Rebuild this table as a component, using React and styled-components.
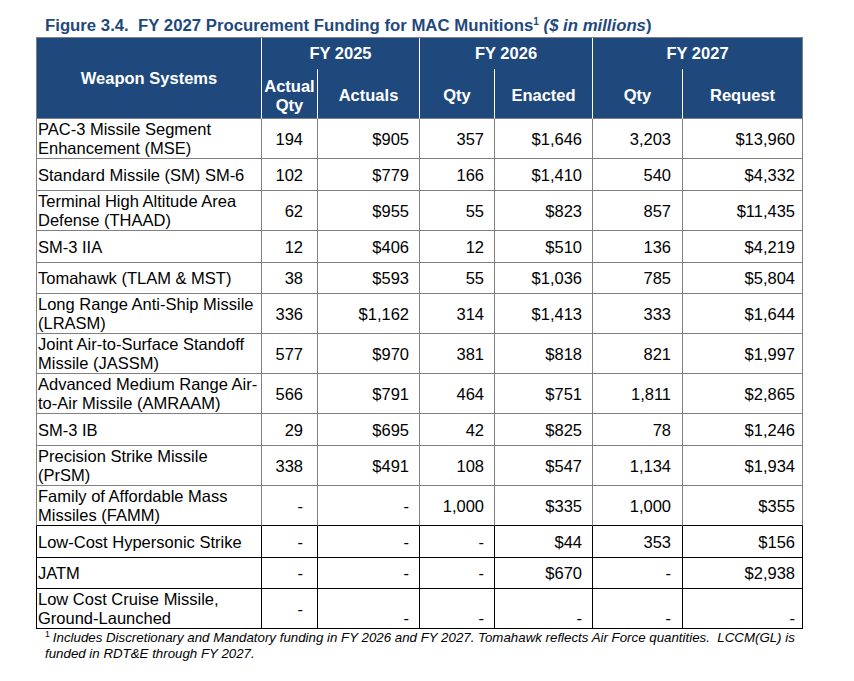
import React from "react";
import styled, { createGlobalStyle } from "styled-components";

const GlobalStyle = createGlobalStyle`
  *, *::before, *::after {
    box-sizing: border-box;
  }
  body {
    margin: 0;
    background: #ffffff;
    font-family: "Liberation Sans", Arial, sans-serif;
    color: #000000;
  }
`;

const Page = styled.div`
  padding: 16px 0 0 36px;
  width: 854px;
`;

const Title = styled.h1`
  margin: 0 0 1px 9px;
  height: 20px;
  font-size: 16.75px;
  line-height: 20px;
  font-weight: bold;
  color: #1f497d;
  white-space: nowrap;
`;

const Sup = styled.sup`
  font-size: 0.6em;
  line-height: 0;
  vertical-align: 0.6em;
`;

const Em = styled.em`
  font-style: italic;
`;

const Table = styled.table`
  border-collapse: separate;
  border-spacing: 0;
  table-layout: fixed;
  width: 767px;
  border-top: 1px solid #808080;
`;

const HeadCell = styled.th`
  padding: ${(p) => (p.$sub ? "4px 0 0" : "0")};
  height: ${(p) => p.$h}px;
  background: #1f497d;
  color: #ffffff;
  font-size: 16.5px;
  line-height: 18.5px;
  font-weight: bold;
  text-align: center;
  vertical-align: middle;
  border-right: 1px solid ${(p) => (p.$last ? "#808080" : "#ffffff")};
  border-left: ${(p) => (p.$first ? "1px solid #808080" : "none")};
  border-bottom: ${(p) => (p.$bottom ? "1px solid #808080" : "none")};
`;

const Row = styled.tr``;

const NameCell = styled.td`
  height: ${(p) => p.$h}px;
  padding: 1px 0 0 1px;
  font-size: 16.5px;
  line-height: 19px;
  white-space: pre-line;
  vertical-align: middle;
  border-left: 1px solid ${(p) => (p.$dark ? "#000000" : "#808080")};
  border-right: 1px solid ${(p) => (p.$dark ? "#000000" : "#808080")};
  border-bottom: 1px solid ${(p) => (p.$darkBottom ? "#000000" : "#808080")};
`;

const NumCell = styled.td`
  height: ${(p) => p.$h}px;
  padding: ${(p) => (p.$low ? 0 : 1)}px ${(p) => p.$pr}px 0 0;
  font-size: 16.5px;
  line-height: 19px;
  text-align: right;
  white-space: nowrap;
  vertical-align: ${(p) => (p.$low ? "bottom" : "middle")};
  border-right: 1px solid ${(p) => (p.$dark ? "#000000" : "#808080")};
  border-bottom: 1px solid ${(p) => (p.$darkBottom ? "#000000" : "#808080")};
`;

const Footnote = styled.p`
  margin: 1px 0 0 9px;
  width: 790px;
  font-size: 13.3px;
  line-height: 15.5px;
  font-style: italic;
  color: #000000;
`;

const FootSup = styled.sup`
  font-size: 0.65em;
  line-height: 0;
  vertical-align: 0.55em;
  font-style: normal;
  margin-right: 3px;
`;

// padding-right of each number column, read off the reference
const numPads = [14, 10, 10, 10, 11, 7];
const colWidths = [226, 56, 102, 75, 98, 90, 120];

const rows = [
  { name: "PAC-3 Missile Segment\nEnhancement (MSE)", h: 40, v: ["194", "$905", "357", "$1,646", "3,203", "$13,960"] },
  { name: "Standard Missile (SM) SM-6", h: 32, v: ["102", "$779", "166", "$1,410", "540", "$4,332"] },
  { name: "Terminal High Altitude Area\nDefense (THAAD)", h: 40, v: ["62", "$955", "55", "$823", "857", "$11,435"] },
  { name: "SM-3 IIA", h: 32, v: ["12", "$406", "12", "$510", "136", "$4,219"] },
  { name: "Tomahawk (TLAM & MST)", h: 31, v: ["38", "$593", "55", "$1,036", "785", "$5,804"] },
  { name: "Long Range Anti-Ship Missile\n(LRASM)", h: 40, v: ["336", "$1,162", "314", "$1,413", "333", "$1,644"] },
  { name: "Joint Air-to-Surface Standoff\nMissile (JASSM)", h: 40, v: ["577", "$970", "381", "$818", "821", "$1,997"] },
  { name: "Advanced Medium Range Air-\nto-Air Missile (AMRAAM)", h: 40, v: ["566", "$791", "464", "$751", "1,811", "$2,865"] },
  { name: "SM-3 IB", h: 32, v: ["29", "$695", "42", "$825", "78", "$1,246"] },
  { name: "Precision Strike Missile\n(PrSM)", h: 40, v: ["338", "$491", "108", "$547", "1,134", "$1,934"] },
  { name: "Family of Affordable Mass\nMissiles (FAMM)", h: 40, v: ["-", "-", "1,000", "$335", "1,000", "$355"] },
  { name: "Low-Cost Hypersonic Strike", h: 32, v: ["-", "-", "-", "$44", "353", "$156"] },
  { name: "JATM", h: 31, v: ["-", "-", "-", "$670", "-", "$2,938"] },
  { name: "Low Cost Cruise Missile,\nGround-Launched", h: 40, v: ["-", "-", "-", "-", "-", "-"], low: true },
];

const App = () => {
  return (
    <Page>
      <GlobalStyle />
      <Title>
        Figure 3.4.{"\u00a0 "}FY 2027 Procurement Funding for MAC Munitions
        <Sup>1</Sup> <Em>($ in millions</Em>)
      </Title>
      <Table>
        <colgroup>
          {colWidths.map((w, i) => (
            <col key={i} style={{ width: w }} />
          ))}
        </colgroup>
        <thead>
          <tr>
            <HeadCell rowSpan={2} $first $bottom $h={32}>
              Weapon Systems
            </HeadCell>
            <HeadCell colSpan={2} $h={31}>FY 2025</HeadCell>
            <HeadCell colSpan={2} $h={31}>FY 2026</HeadCell>
            <HeadCell colSpan={2} $last $h={31}>FY 2027</HeadCell>
          </tr>
          <tr>
            <HeadCell $sub $bottom $h={50}>
              Actual
              <br />
              Qty
            </HeadCell>
            <HeadCell $sub $bottom $h={50}>Actuals</HeadCell>
            <HeadCell $sub $bottom $h={50}>Qty</HeadCell>
            <HeadCell $sub $bottom $h={50}>Enacted</HeadCell>
            <HeadCell $sub $bottom $h={50}>Qty</HeadCell>
            <HeadCell $sub $bottom $last $h={50}>Request</HeadCell>
          </tr>
        </thead>
        <tbody>
          {rows.map((row, r) => (
            <Row key={row.name}>
              <NameCell $h={row.h} $dark={r >= 11} $darkBottom={r >= 10}>
                {row.name}
              </NameCell>
              {row.v.map((val, c) => (
                <NumCell
                  key={c}
                  $h={row.h}
                  $pr={numPads[c]}
                  $dark={r >= 11}
                  $darkBottom={r >= 10}
                  $low={row.low && c > 0}
                >
                  {val}
                </NumCell>
              ))}
            </Row>
          ))}
        </tbody>
      </Table>
      <Footnote>
        <FootSup>1</FootSup>
        Includes Discretionary and Mandatory funding in FY 2026 and FY 2027.
        Tomahawk reflects Air Force quantities.{"\u00a0 "}LCCM(GL) is
        <br />
        funded in RDT&amp;E through FY 2027.
      </Footnote>
    </Page>
  );
};

export default App;
